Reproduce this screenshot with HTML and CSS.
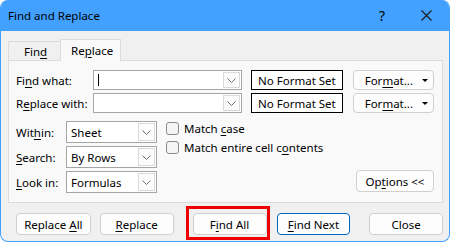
FILE: index.html
```html
<!DOCTYPE html>
<html lang="en">
<head>
  <meta charset="UTF-8">
  <title>Find and Replace</title>
  <link rel="stylesheet" href="styles.css">
</head>
<body>
  <div class="window">
    <div class="titlebar">
      <span class="title">Find and Replace</span>
      <span class="help">?</span>
      <span class="close">
        <svg width="11" height="11" viewBox="0 0 11 11"><path d="M0.5 0.5 L10.5 10.5 M10.5 0.5 L0.5 10.5" stroke="#1a1a1a" stroke-width="1.1" fill="none"/></svg>
      </span>
    </div>
    <div class="body">
      <div class="tabs">
        <div class="tab"><span>Fin<u>d</u></span></div>
        <div class="tab active"><span>Re<u>p</u>lace</span></div>
      </div>
      <div class="panel">
        <div class="row">
          <span class="label wide"><span>Fi<u>n</u>d what:</span></span>
          <div class="combo long"><span class="value"><span class="caret"></span></span><span class="drop"><svg width="9" height="5" viewBox="0 0 9 5"><path d="M0.5 0.5 L4.5 4.5 L8.5 0.5" stroke="#707070" fill="none"/></svg></span></div>
          <div class="format-set">No Format Set</div>
          <div class="format"><span>For<u>m</u>at...</span><span class="tri"></span></div>
        </div>
        <div class="row">
          <span class="label wide"><span>R<u>e</u>place with:</span></span>
          <div class="combo long"><span class="value"></span><span class="drop"><svg width="9" height="5" viewBox="0 0 9 5"><path d="M0.5 0.5 L4.5 4.5 L8.5 0.5" stroke="#707070" fill="none"/></svg></span></div>
          <div class="format-set">No Format Set</div>
          <div class="format"><span>For<u>m</u>at...</span><span class="tri"></span></div>
        </div>
        <div class="options">
          <div class="selects">
            <span class="label"><span>Wit<u>h</u>in:</span></span>
            <div class="combo short"><span class="value">Sheet</span><span class="drop"><svg width="9" height="5" viewBox="0 0 9 5"><path d="M0.5 0.5 L4.5 4.5 L8.5 0.5" stroke="#707070" fill="none"/></svg></span></div>
            <span class="label"><span><u>S</u>earch:</span></span>
            <div class="combo short"><span class="value">By Rows</span><span class="drop"><svg width="9" height="5" viewBox="0 0 9 5"><path d="M0.5 0.5 L4.5 4.5 L8.5 0.5" stroke="#707070" fill="none"/></svg></span></div>
            <span class="label"><span><u>L</u>ook in:</span></span>
            <div class="combo short"><span class="value">Formulas</span><span class="drop"><svg width="9" height="5" viewBox="0 0 9 5"><path d="M0.5 0.5 L4.5 4.5 L8.5 0.5" stroke="#707070" fill="none"/></svg></span></div>
          </div>
          <div class="checks">
            <div class="check"><span class="box"></span><span>Match <u>c</u>ase</span></div>
            <div class="check"><span class="box"></span><span>Match entire cell c<u>o</u>ntents</span></div>
          </div>
          <div class="btn options-btn"><span>Op<u>t</u>ions &lt;&lt;</span></div>
        </div>
      </div>
      <div class="actions">
        <div class="btn first"><span>Replace <u>A</u>ll</span></div>
        <div class="btn replace"><span><u>R</u>eplace</span></div>
        <div class="highlight"><div class="btn"><span>F<u>i</u>nd All</span></div></div>
        <div class="btn default"><span><u>F</u>ind Next</span></div>
        <div class="btn close-btn">Close</div>
      </div>
    </div>
  </div>
</body>
</html>
```

FILE: styles.css
```css
body {
  margin: 0;
  background: #ffffff;
  font-family: "Noto Sans", "Open Sans", sans-serif;
  font-size: 11.5px;
  color: #000;
}
u {
  text-decoration-thickness: 1px;
  text-underline-offset: 2px;
}
.window {
  width: 450px;
  height: 242px;
  box-sizing: border-box;
  border: 1px solid #42a0ff;
  border-top: none;
  border-radius: 8px;
  overflow: hidden;
  background: #f0f0f0;
  display: flex;
  flex-direction: column;
}
.titlebar {
  flex-shrink: 0;
  height: 31px;
  background: #42a0ff;
  display: flex;
  align-items: center;
  padding-left: 8px;
  margin: 0 -1px;
}
.title {
  flex: 1;
}
.help {
  font-size: 14px;
  margin-right: 36px;
}
.close {
  display: flex;
  margin-right: 18px;
}
.body {
  padding: 7px 6px 0 7px;
  flex: 1;
}
.tabs {
  display: flex;
  align-items: flex-end;
  height: 22px;
}
.tab {
  height: 19px;
  box-sizing: border-box;
  padding: 0 15px;
  border: 1px solid #dcdcdc;
  border-bottom: none;
  border-right: none;
  display: flex;
  align-items: center;
  width: 52px;
}
.tab.active {
  height: 22px;
  width: 61px;
  background: #f9f9f9;
  border-right: 1px solid #dcdcdc;
  padding: 0 10px;
  position: relative;
  top: 1px;
}
.panel {
  height: 143px;
  box-sizing: border-box;
  border: 1px solid #dcdcdc;
  background: #f9f9f9;
  padding: 9px 8px 0 7px;
}
.row {
  display: flex;
  align-items: center;
  height: 20px;
  margin-bottom: 3px;
}
.label {
  display: flex;
  align-items: center;
}
.label.wide {
  width: 78px;
}
.combo {
  height: 20px;
  box-sizing: border-box;
  border: 1px solid #a5a5a5;
  background: #fff;
  display: flex;
}
.combo.long {
  width: 150px;
}
.combo.short {
  width: 91px;
  height: 22px;
}
.value {
  flex: 1;
  display: flex;
  align-items: center;
  padding-left: 4px;
}
.caret {
  width: 1px;
  height: 12px;
  background: #000;
}
.drop {
  width: 15px;
  margin: 1px;
  border: 1px solid #dadada;
  background: #fcfcfc;
  display: flex;
  align-items: center;
  justify-content: center;
}
.format-set {
  margin-left: 9px;
  width: 92px;
  height: 20px;
  box-sizing: border-box;
  border: 1px solid #000;
  background: #fff;
  display: flex;
  align-items: center;
  justify-content: center;
}
.format {
  margin-left: 10px;
  width: 82px;
  height: 20px;
  box-sizing: border-box;
  border: 1px solid #d0d0d0;
  border-radius: 4px;
  background: #fdfdfd;
  display: flex;
  align-items: center;
  justify-content: flex-end;
  padding-right: 5px;
}
.tri {
  margin-left: 9px;
  border-left: 3px solid transparent;
  border-right: 3px solid transparent;
  border-top: 3px solid #000;
}
.options {
  display: flex;
  margin-top: 8px;
}
.selects {
  display: grid;
  grid-template-columns: 50px 91px;
  row-gap: 3px;
}
.checks {
  margin-left: 9px;
  padding-top: 1px;
  display: flex;
  flex-direction: column;
  gap: 6px;
}
.check {
  display: flex;
  align-items: center;
  height: 13px;
}
.box {
  width: 13px;
  height: 13px;
  box-sizing: border-box;
  border: 1px solid #8a8a8a;
  border-radius: 3px;
  background: #f5f5f5;
  margin-right: 5px;
}
.btn {
  width: 74px;
  height: 22px;
  box-sizing: border-box;
  border: 1px solid #d0d0d0;
  border-radius: 4px;
  background: #fdfdfd;
  display: flex;
  align-items: center;
  justify-content: center;
}
.options-btn {
  margin-left: auto;
  align-self: flex-end;
  width: 78px;
  margin-bottom: 1px;
}
.actions {
  display: flex;
  align-items: flex-start;
  padding: 10px 0 0 8px;
}
.actions .first {
  width: 75px;
}
.actions .replace {
  margin-left: 9px;
}
.highlight {
  margin: -7px 0 0 12px;
  padding: 4px 0 2px 4px;
  border: 3px solid #ee0000;
}
.default {
  margin-left: 7px;
  border-color: #0067c0;
}
.actions .close-btn {
  margin-left: 19px;
}
```
